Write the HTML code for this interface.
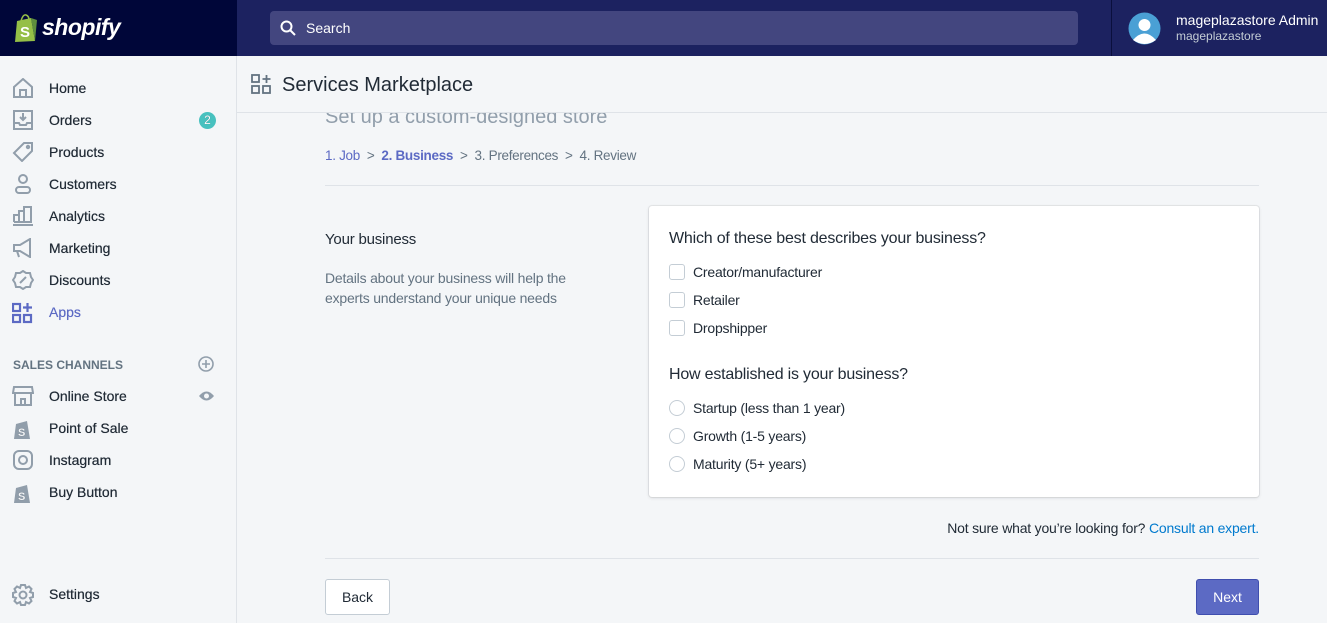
<!DOCTYPE html>
<html><head><meta charset="utf-8"><style>
*{box-sizing:border-box;margin:0;padding:0}
body{width:1327px;height:623px;overflow:hidden;background:#f4f6f8;font-family:"Liberation Sans",sans-serif;color:#212b36;position:relative}
.top{position:absolute;left:0;top:0;width:1327px;height:56px;background:#1c2260}
.logo{position:absolute;left:0;top:0;width:237px;height:56px;background:#000639}
.search{position:absolute;left:270px;top:11px;width:808px;height:34px;background:#43467f;border-radius:4px;color:#fff;font-size:14px;line-height:34px;padding-left:36px}
.user{position:absolute;left:1111px;top:0;height:56px;border-left:1px solid #0a0f3d;width:216px}
.side{position:absolute;left:0;top:56px;width:237px;height:567px;border-right:1px solid #dfe3e8;background:#f4f6f8}
.item{position:absolute;left:0;height:32px;width:236px;font-size:14px;line-height:32px;padding-left:49px;color:#212b36;text-shadow:0 0 0.4px #212b36}
.item svg{position:absolute;left:12px;top:6px}
.hdr{position:absolute;left:237px;top:56px;width:1090px;height:57px;border-bottom:1px solid #dfe3e8;font-size:20px;color:#212b36;padding:18px 0 0 45px}
.r{position:absolute;font-size:14px;letter-spacing:-0.2px}
.cb{position:absolute;left:669px;width:16px;height:16px;border:1px solid #c4cdd5;border-radius:3px;background:#fff}
.rd{position:absolute;left:669px;width:16px;height:16px;border:1px solid #c4cdd5;border-radius:50%;background:#fff}
.opt{position:absolute;left:693px;font-size:14px;color:#212b36;letter-spacing:-0.2px}
</style></head><body>
<div class="top"></div>
<div class="logo">
<svg style="position:absolute;left:13px;top:13px" width="26" height="30" viewBox="0 0 26 30"><path d="M4 8 L18 5 L22 28 L2 29 Z" fill="#95bf47"/><path d="M18 5 L24 7 L22 28 Z" fill="#5e8e3e"/><path d="M8 8 Q10 1 13 2 Q16 3 16 7" fill="none" stroke="#95bf47" stroke-width="1.5"/><text x="7" y="24" fill="#fff" font-size="15" font-weight="bold" font-family="Liberation Sans">S</text></svg>
<div style="position:absolute;left:42px;top:14px;color:#fff;font-size:23px;font-weight:bold;font-style:italic;letter-spacing:-0.5px">shopify</div>
</div>
<div class="search"><svg style="position:absolute;left:10px;top:9px" width="16" height="16" viewBox="0 0 16 16"><circle cx="6.5" cy="6.5" r="5" fill="none" stroke="#fff" stroke-width="2"/><path d="M10 10 L15 15" stroke="#fff" stroke-width="2"/></svg>Search</div>
<div class="user">
<svg style="position:absolute;left:16px;top:12px" width="33" height="33" viewBox="0 0 33 33"><circle cx="16.5" cy="16.5" r="16" fill="#4aa0d5"/><circle cx="16.5" cy="13" r="6" fill="#fff"/><path d="M5 28 Q16.5 15 28 28 Q16.5 36 5 28Z" fill="#fff"/></svg>
<div style="position:absolute;left:64px;top:12px;color:#fff;font-size:14px">mageplazastore Admin</div>
<div style="position:absolute;left:64px;top:29px;color:#c4cdd5;font-size:12px">mageplazastore</div>
</div>
<div class="side">
<div class="item" style="top:16px"><svg width="22" height="20" viewBox="0 0 22 20" fill="none" stroke="#919eab" stroke-width="2"><path d="M2 9 L11 1 L20 9 V19 H2Z M8 19 V12 H14 V19"/></svg>Home</div>
<div class="item" style="top:48px"><svg width="22" height="20" viewBox="0 0 22 20" fill="none" stroke="#919eab" stroke-width="2"><path d="M2 1 H20 V19 H2Z M2 13 H7 L8 15 H14 L15 13 H20 M11 3 V10 M8 7 L11 10 L14 7"/></svg>Orders<span style="position:absolute;left:199px;top:8px;width:17px;height:17px;border-radius:50%;background:#47c1bf;color:#fff;font-size:12px;line-height:17px;text-align:center">2</span></div>
<div class="item" style="top:80px"><svg width="22" height="20" viewBox="0 0 22 20" fill="none" stroke="#919eab" stroke-width="2"><path d="M12 1 H20 V9 L10 19 L2 11Z"/><circle cx="16" cy="5" r="1.2"/></svg>Products</div>
<div class="item" style="top:112px"><svg width="22" height="20" viewBox="0 0 22 20" fill="none" stroke="#919eab" stroke-width="2"><circle cx="11" cy="5" r="4"/><rect x="4" y="13" width="14" height="6" rx="3"/></svg>Customers</div>
<div class="item" style="top:144px"><svg width="22" height="20" viewBox="0 0 22 20" fill="none" stroke="#919eab" stroke-width="2"><path d="M1 19 H21 M2 16 V9 H7 V16 M7 16 V5 H12 V16 M12 16 V1 H19 V16 H2"/></svg>Analytics</div>
<div class="item" style="top:176px"><svg width="22" height="20" viewBox="0 0 22 20" fill="none" stroke="#919eab" stroke-width="2"><path d="M2 7 H8 L18 1 V19 L8 13 H2Z M5 13 L7 19"/></svg>Marketing</div>
<div class="item" style="top:208px"><svg width="22" height="20" viewBox="0 0 22 20" fill="none" stroke="#919eab" stroke-width="2"><path d="M11 1 L14 3 L18 3 L19 7 L21 10 L19 13 L18 17 L14 17 L11 19 L8 17 L4 17 L3 13 L1 10 L3 7 L4 3 L8 3Z M8 13 L14 7"/></svg>Discounts</div>
<div class="item" style="top:240px;color:#5c6ac4;text-shadow:0 0 0.4px #5c6ac4"><svg width="22" height="22" viewBox="0 0 22 22" fill="none" stroke="#5c6ac4" stroke-width="2.2"><rect x="1" y="2" width="7" height="7"/><rect x="1" y="13" width="7" height="7"/><rect x="12" y="13" width="7" height="7"/><path d="M15.5 1 V10 M11 5.5 H20"/></svg>Apps</div>
<div style="position:absolute;left:13px;top:302px;font-size:12px;font-weight:bold;color:#637381">SALES CHANNELS</div>
<svg style="position:absolute;left:198px;top:300px" width="16" height="16" viewBox="0 0 16 16" fill="none" stroke="#919eab" stroke-width="1.6"><circle cx="8" cy="8" r="7"/><path d="M8 4 V12 M4 8 H12"/></svg>
<div class="item" style="top:324px"><svg width="22" height="20" viewBox="0 0 22 20" fill="none" stroke="#919eab" stroke-width="2"><path d="M2 1 H20 L21 7 H1Z M3 7 V19 H19 V7 M9 19 V13 H13 V19"/></svg>Online Store<svg style="left:198px;top:10px" width="17" height="12" viewBox="0 0 17 12"><path d="M1 6 Q8.5 -3 16 6 Q8.5 15 1 6Z" fill="#919eab"/><circle cx="8.5" cy="6" r="2.5" fill="#f4f6f8"/></svg></div>
<div class="item" style="top:356px"><svg width="22" height="22" viewBox="0 0 22 22"><path d="M4 6 L15 3 L18 21 L2 21 Z" fill="#919eab"/><text x="6" y="18" fill="#f4f6f8" font-size="11" font-weight="bold">S</text></svg>Point of Sale</div>
<div class="item" style="top:388px"><svg width="22" height="20" viewBox="0 0 22 20" fill="none" stroke="#919eab" stroke-width="2"><rect x="2" y="1" width="18" height="18" rx="5"/><circle cx="11" cy="10" r="4"/></svg>Instagram</div>
<div class="item" style="top:420px"><svg width="22" height="22" viewBox="0 0 22 22"><path d="M4 6 L15 3 L18 21 L2 21 Z" fill="#919eab"/><text x="6" y="18" fill="#f4f6f8" font-size="11" font-weight="bold">S</text></svg>Buy Button</div>
<div class="item" style="top:522px"><svg width="22" height="22" viewBox="0 0 22 22" fill="none" stroke="#919eab" stroke-width="2"><circle cx="11" cy="11" r="3.5"/><path d="M9 1 H13 L14 4 L17 2.5 L19.5 5 L18 8 L21 9 V13 L18 14 L19.5 17 L17 19.5 L14 18 L13 21 H9 L8 18 L5 19.5 L2.5 17 L4 14 L1 13 V9 L4 8 L2.5 5 L5 2.5 L8 4Z"/></svg>Settings</div>
</div>
<div class="hdr"><svg style="position:absolute;left:14px;top:18px" width="20" height="20" viewBox="0 0 20 20" fill="none" stroke="#637381" stroke-width="1.8"><rect x="1" y="1" width="7" height="7"/><rect x="1" y="12" width="7" height="7"/><rect x="12" y="12" width="7" height="7"/><path d="M15.5 1 V9 M11.5 5 H19.5"/></svg>Services Marketplace</div>
<div class="r" style="left:325px;top:106px;font-size:20px;color:#919eab;clip-path:inset(7px 0 0 0);letter-spacing:0">Set up a custom-designed store</div>
<div class="r" style="left:325px;top:148px;color:#637381;font-size:13.5px;letter-spacing:-0.3px"><span style="color:#5c6ac4">1. Job</span> &nbsp;&gt;&nbsp; <span style="color:#5c6ac4;font-weight:bold">2. Business</span> &nbsp;&gt;&nbsp; 3. Preferences &nbsp;&gt;&nbsp; 4. Review</div>
<div style="position:absolute;left:325px;top:185px;width:934px;height:1px;background:#dfe3e8"></div>
<div class="r" style="left:325px;top:231px;font-size:15px">Your business</div>
<div class="r" style="left:325px;top:268px;color:#637381;line-height:20px">Details about your business will help the<br>experts understand your unique needs</div>
<div style="position:absolute;left:649px;top:206px;width:610px;height:291px;background:#fff;border-radius:3px;box-shadow:0 0 0 1px rgba(63,63,68,.08),0 1px 3px rgba(63,63,68,.15)"></div>
<div class="r" style="left:669px;top:230px;font-size:16px">Which of these best describes your business?</div>
<div class="cb" style="top:264px"></div><div class="opt" style="top:264px">Creator/manufacturer</div>
<div class="cb" style="top:292px"></div><div class="opt" style="top:292px">Retailer</div>
<div class="cb" style="top:320px"></div><div class="opt" style="top:320px">Dropshipper</div>
<div class="r" style="left:669px;top:366px;font-size:16px">How established is your business?</div>
<div class="rd" style="top:400px"></div><div class="opt" style="top:400px">Startup (less than 1 year)</div>
<div class="rd" style="top:428px"></div><div class="opt" style="top:428px">Growth (1-5 years)</div>
<div class="rd" style="top:456px"></div><div class="opt" style="top:456px">Maturity (5+ years)</div>
<div class="r" style="right:68px;top:520px">Not sure what you’re looking for? <span style="color:#007ace">Consult an expert.</span></div>
<div style="position:absolute;left:325px;top:558px;width:934px;height:1px;background:#dfe3e8"></div>
<div style="position:absolute;left:325px;top:579px;width:65px;height:36px;background:#fff;border:1px solid #c4cdd5;border-radius:3px;font-size:14px;line-height:34px;text-align:center">Back</div>
<div style="position:absolute;left:1196px;top:579px;width:63px;height:36px;background:#5c6ac4;border:1px solid #3f4eae;border-radius:3px;font-size:14px;line-height:34px;text-align:center;color:#fff">Next</div>
</body></html>
